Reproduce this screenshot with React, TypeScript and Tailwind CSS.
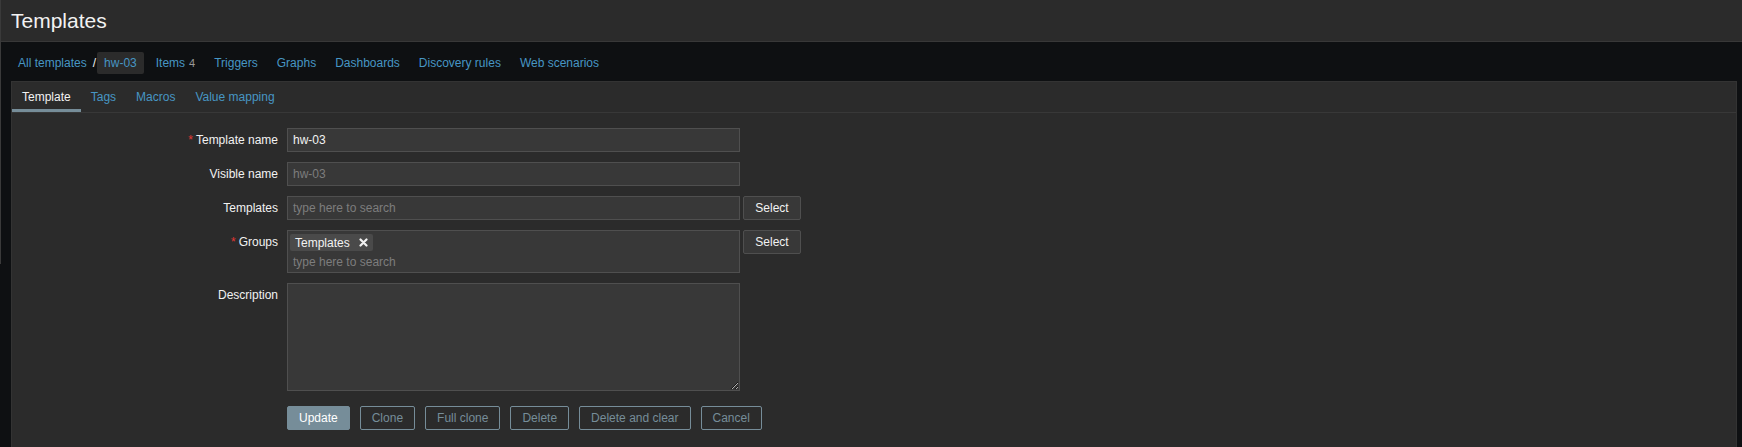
import React from "react";

const font = { fontFamily: '"Liberation Sans", Arial, sans-serif' };

function Label({ text, required }: { text: string; required?: boolean }) {
  return (
    <div className="w-[266px] h-[24px] flex items-center justify-end text-[12px] text-[#f2f2f2] shrink-0">
      {required && <span className="text-[#e33734] mr-[3px]">*</span>}
      {text}
    </div>
  );
}

function SelectBtn() {
  return (
    <button className="ml-[3px] w-[58px] h-[24px] bg-[#383838] border border-[#4f4f4f] text-[12px] text-[#f2f2f2] flex items-center justify-center rounded-[2px]">
      Select
    </button>
  );
}

export default function App() {
  const navItems = ["Triggers", "Graphs", "Dashboards", "Discovery rules", "Web scenarios"];
  const tabs = ["Template", "Tags", "Macros", "Value mapping"];
  const buttons = ["Clone", "Full clone", "Delete", "Delete and clear", "Cancel"];
  return (
    <div className="w-[1742px] h-[447px] bg-[#0e1012] flex overflow-hidden" style={font}>
      <div className="w-[1px] shrink-0 flex flex-col">
        <div className="h-[264px] bg-[#3a3a3a]" />
        <div className="flex-1 bg-[#0e1012]" />
      </div>
      <div className="flex-1 flex flex-col">
        <header className="h-[42px] bg-[#2b2b2b] border-b border-[#383838] flex items-center pl-[10px]">
          <h1 className="text-[21px] text-[#f2f2f2] leading-none">Templates</h1>
        </header>
        <nav className="h-[39px] flex items-start pt-[10px] pl-[17px] text-[12px]">
          <span className="h-[22px] flex items-center text-[#4796c4]">All templates</span>
          <span className="h-[22px] flex items-center text-[#f2f2f2] ml-[6px]">/</span>
          <span className="h-[22px] flex items-center px-[7px] ml-[1px] bg-[#2b2b2b] text-[#4796c4] rounded-[2px]">hw-03</span>
          <span className="h-[22px] flex items-center ml-[12px] text-[#4796c4]">
            Items<span className="ml-[4px] text-[#999999] text-[11px]">4</span>
          </span>
          {navItems.map((n) => (
            <span key={n} className="h-[22px] flex items-center ml-[19px] text-[#4796c4]">
              {n}
            </span>
          ))}
        </nav>
        <div className="flex-1 flex pl-[10px] pr-[5px]">
          <div className="flex-1 bg-[#2b2b2b] border-x border-t border-[#333333] flex flex-col">
            <div className="h-[31px] flex border-b border-[#383838] text-[12px]">
              {tabs.map((t, i) => (
                <div
                  key={t}
                  className={
                    i === 0
                      ? "h-full flex items-center px-[10px] text-[#f2f2f2] shadow-[inset_0_-3px_0_#768d99]"
                      : "h-full flex items-center px-[10px] text-[#4796c4]"
                  }
                >
                  {t}
                </div>
              ))}
            </div>
            <div className="flex flex-col pt-[15px] gap-[10px]">
              <div className="flex">
                <Label text="Template name" required />
                <div className="ml-[9px] w-[453px] h-[24px] bg-[#383838] border border-[#4f4f4f] flex items-center pl-[5px] text-[12px] text-[#f2f2f2]">
                  hw-03
                </div>
              </div>
              <div className="flex">
                <Label text="Visible name" />
                <div className="ml-[9px] w-[453px] h-[24px] bg-[#383838] border border-[#4f4f4f] flex items-center pl-[5px] text-[12px] text-[#7d7d7d]">
                  hw-03
                </div>
              </div>
              <div className="flex">
                <Label text="Templates" />
                <div className="ml-[9px] w-[453px] h-[24px] bg-[#383838] border border-[#4f4f4f] flex items-center pl-[5px] text-[12px] text-[#7d7d7d]">
                  type here to search
                </div>
                <SelectBtn />
              </div>
              <div className="flex items-start">
                <Label text="Groups" required />
                <div className="ml-[9px] w-[453px] h-[43px] bg-[#383838] border border-[#4f4f4f] flex flex-col items-start pl-[2px] pt-[3px] text-[12px]">
                  <div className="h-[17px] bg-[#4a4a4a] rounded-[2px] flex items-center pl-[5px] pr-[5px] text-[#f2f2f2]">
                    Templates
                    <svg className="ml-[9px]" width="9" height="9" viewBox="0 0 9 9">
                      <path d="M1.5 1.5 L7.5 7.5 M7.5 1.5 L1.5 7.5" stroke="#f2f2f2" strokeWidth="2.2" strokeLinecap="round" />
                    </svg>
                  </div>
                  <div className="pl-[3px] mt-[2px] text-[#7d7d7d]">type here to search</div>
                </div>
                <SelectBtn />
              </div>
              <div className="flex items-start">
                <Label text="Description" />
                <textarea
                  className="ml-[9px] w-[453px] h-[108px] bg-[#383838] border border-[#4f4f4f] text-[12px] text-[#f2f2f2] outline-none"
                  defaultValue=""
                />
              </div>
              <div className="flex pl-[275px] gap-[10px] mt-[5px]">
                <button className="h-[24px] px-[11px] bg-[#768d99] border border-[#768d99] text-[12px] text-white rounded-[2px]">
                  Update
                </button>
                {buttons.map((b) => (
                  <button
                    key={b}
                    className="h-[24px] px-[11px] bg-transparent border border-[#768d99] text-[12px] text-[#768d99] rounded-[2px]"
                  >
                    {b}
                  </button>
                ))}
              </div>
            </div>
          </div>
        </div>
      </div>
    </div>
  );
}
